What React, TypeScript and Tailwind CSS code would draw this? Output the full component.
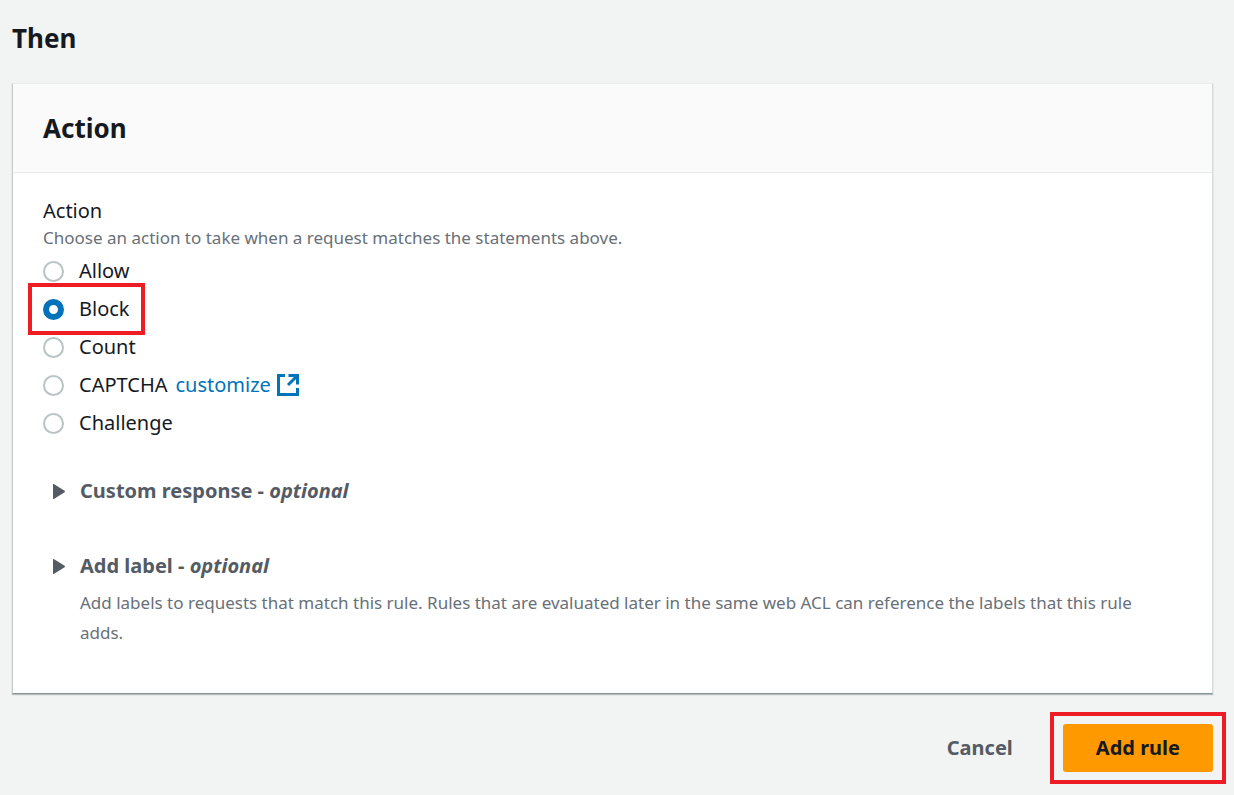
import React, { useState } from 'react';

interface ActionOption {
  value: string;
  label: string;
  link?: string;
  highlighted?: boolean;
}

const options: ActionOption[] = [
  { value: 'allow', label: 'Allow' },
  { value: 'block', label: 'Block', highlighted: true },
  { value: 'count', label: 'Count' },
  { value: 'captcha', label: 'CAPTCHA', link: 'customize' },
  { value: 'challenge', label: 'Challenge' },
];

const ExternalIcon: React.FC = () => (
  <svg className="h-[22px] w-[22px]" viewBox="0 0 22 22" fill="none" stroke="currentColor" strokeWidth="3" aria-hidden="true">
    <path d="M8 1.5H1.5v19h19V14" />
    <path d="M11.5 1.5h9v9" />
    <path d="M20 2l-9 9" />
  </svg>
);

interface ExpandableProps {
  title: string;
  children?: React.ReactNode;
}

const Expandable: React.FC<ExpandableProps> = ({ title, children }) => {
  const [open, setOpen] = useState(false);

  return (
    <section className="px-[10px]">
      <button
        type="button"
        aria-expanded={open}
        onClick={() => setOpen(!open)}
        className="flex h-[30px] items-center gap-[15px] font-bold text-[#545b64]"
      >
        <svg className="h-[15px] w-3" viewBox="0 0 12 15" fill="currentColor" aria-hidden="true">
          <path d="M0 0.5q0-.8.8-.4L11.6 6.8q.7.7 0 1.4L.8 14.9q-.8.4-.8-.4z" />
        </svg>
        <span>{title} - <i>optional</i></span>
      </button>
      {children}
    </section>
  );
};

const App: React.FC = () => {
  const [action, setAction] = useState('block');

  return (
    <main className="min-h-screen bg-[#f2f3f3] pt-[22px] pr-[21px] pl-3 font-['Noto_Sans',sans-serif] text-[20px] text-[#16191f]">
      <h1 className="text-[26px] leading-8 font-bold">Then</h1>

      <div className="mt-[29px] border border-t-[#eaeded] border-r-[#d5dbdb] border-b-[#879596] border-l-[#c6cccc] bg-white shadow-[0_1px_1px_#001c2440]">
        <header className="border-b border-[#eaeded] bg-[#fafafa] px-[30px] py-7">
          <h2 className="text-[26px] leading-8 font-bold">Action</h2>
        </header>

        <div className="px-[30px] pt-6 pb-[45px]">
          <fieldset>
            <legend className="leading-[28px]">Action</legend>
            <p className="text-[17px] leading-[26px] text-[#687078]">
              Choose an action to take when a request matches the statements above.
            </p>
            <div className="mt-px flex flex-col items-start">
              {options.map(option => (
                <div key={option.value} className="relative flex h-[38px] items-center">
                  <input
                    id={option.value}
                    type="radio"
                    name="action"
                    value={option.value}
                    checked={action === option.value}
                    onChange={() => setAction(option.value)}
                    className="h-[21px] w-[21px] appearance-none rounded-full border-2 border-[#b8c3c4] bg-white checked:border-[6px] checked:border-[#0073bb]"
                  />
                  <label htmlFor={option.value} className="pl-[15px]">{option.label}</label>
                  {option.link && (
                    <a href="#customize" className="flex items-center gap-[6px] pl-2 text-[#0073bb]">
                      {option.link}
                      <ExternalIcon />
                    </a>
                  )}
                  {option.highlighted && (
                    <span className="pointer-events-none absolute -inset-x-[15px] -inset-y-[7px] z-10 border-4 border-[#ee1c25]" />
                  )}
                </div>
              ))}
            </div>
          </fieldset>

          <div className="mt-[34px] flex flex-col gap-[45px]">
            <Expandable title="Custom response" />
            <Expandable title="Add label">
              <p className="mt-[7px] pl-[27px] text-[17px] leading-[30px] text-[#687078]">
                Add labels to requests that match this rule. Rules that are evaluated later in the same web ACL can reference the labels that this rule adds.
              </p>
            </Expandable>
          </div>
        </div>
      </div>

      <footer className="flex justify-end gap-[17px] pt-[30px] pb-5 font-bold">
        <button type="button" className="h-12 px-[33px] text-[#545b64]">Cancel</button>
        <div className="relative">
          <button type="button" className="h-12 rounded-[3px] bg-[#ff9900] px-[33px]">Add rule</button>
          <span className="pointer-events-none absolute -inset-x-[13px] -inset-y-3 border-4 border-[#ee1c25]" />
        </div>
      </footer>
    </main>
  );
};

export default App;
